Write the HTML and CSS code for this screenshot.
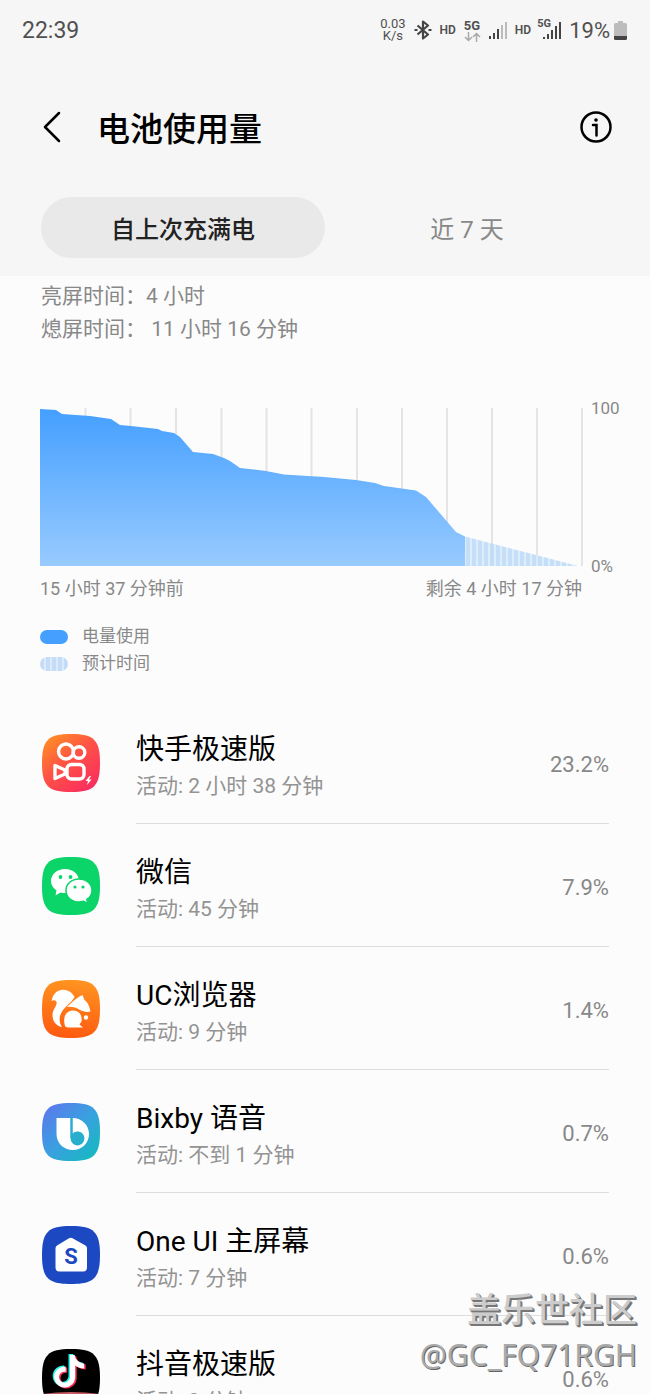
FILE: index.html
```
<!DOCTYPE html>
<html lang="zh-CN">

<head>
	<meta charset="UTF-8" />
	<meta name="viewport" content="width=device-width, initial-scale=1.0" />
	<title>电池使用量</title>
	<link rel="stylesheet" href="styles.css">
</head>

<body>
	<!-- shared by every app icon -->
	<svg class="defs" width="0" height="0" aria-hidden="true">
		<defs>
			<path id="squircle" d="M0 29C0 6 6 0 29 0S58 6 58 29 52 58 29 58 0 52 0 29Z" />
			<clipPath id="squircle-clip"><use href="#squircle" /></clipPath>
			<linearGradient id="ks-bg" x1="0" y1="0" x2="0.8" y2="1">
				<stop offset="0" stop-color="#ff9a1f" />
				<stop offset="0.5" stop-color="#ff5245" />
				<stop offset="1" stop-color="#f92d60" />
			</linearGradient>
			<linearGradient id="uc-bg" x1="0.6" y1="0" x2="0.5" y2="1">
				<stop offset="0" stop-color="#ff9420" />
				<stop offset="1" stop-color="#ff5a10" />
			</linearGradient>
			<linearGradient id="bixby-bg" x1="0" y1="0" x2="1" y2="1">
				<stop offset="0" stop-color="#5f74ee" />
				<stop offset="0.5" stop-color="#3aa0e0" />
				<stop offset="1" stop-color="#10bdbb" />
			</linearGradient>
		</defs>
	</svg>

	<div class="screen">
		<header class="header">
			<div class="status-bar">
				<span class="clock">22:39</span>
				<div class="status-icons">
					<span class="net-speed">0.03<br>K/s</span>
					<svg class="bluetooth" width="18" height="20" viewBox="0 0 18 20" fill="none" stroke="#444" stroke-width="2.200" stroke-linejoin="round">
						<path d="M3.500 5.500L14 14.500L9 18.500V1.500L14 5.500L3.500 14.500" />
						<path d="M0.500 10h3M14.500 10h3" />
					</svg>
					<span class="hd">HD</span>
					<span class="net-type">5G
						<svg width="17" height="10" viewBox="0 0 17 10" fill="none" stroke="#aaa" stroke-width="1.500">
							<path d="M4.500 0v8M1 5l3.500 3.500L8 5M12.500 10V2M9 5l3.500-3.500L16 5" />
						</svg>
					</span>
					<svg class="signal" width="18" height="18" viewBox="0 0 18 18">
						<path fill="#444" d="M0 15h2v3H0zM4 12h2v6H4zM8 8h2v10H8z" />
						<path fill="#bbb" d="M12 4h2v14h-2zM16 1h2v17h-2z" />
					</svg>
					<span class="hd">HD</span>
					<span class="signal-5g">
						<svg width="18" height="18" viewBox="0 0 18 18">
							<path fill="#444" d="M0 16h2v2H0zM4 13h2v5H4zM8 9h2v9H8zM12 5h2v13h-2zM16 1h2v17h-2z" />
						</svg>
						<span>5G</span>
					</span>
					<span class="battery-level">19%</span>
					<svg class="battery" width="13" height="19" viewBox="0 0 13 19">
						<path fill="#bcbcbc" d="M4 0h5v2h2.500a1.500 1.500 0 0 1 1.500 1.500V15H0V3.500A1.500 1.500 0 0 1 1.500 2H4z" />
						<path fill="#444" d="M0 15h13v2.500a1.500 1.500 0 0 1-1.500 1.500h-10A1.500 1.500 0 0 1 0 17.500z" />
					</svg>
				</div>
			</div>

			<div class="title-bar">
				<button class="icon-btn" aria-label="返回">
					<svg width="18" height="32" viewBox="0 0 18 32" fill="none" stroke="#000" stroke-width="2.500" stroke-linecap="round" stroke-linejoin="round">
						<path d="M16 2L2 16l14 14" />
					</svg>
				</button>
				<h1>电池使用量</h1>
				<button class="icon-btn" aria-label="信息">
					<svg width="32" height="32" viewBox="0 0 32 32" fill="none" stroke="#000" stroke-width="2.500" stroke-linecap="round">
						<circle cx="16" cy="16" r="14.500" />
						<path d="M13 14h3.500v10.500" />
						<circle cx="16" cy="9" r="1.800" fill="#000" stroke="none" />
					</svg>
				</button>
			</div>

			<div class="tabs" role="tablist">
				<button class="tab selected" role="tab" aria-selected="true">自上次充满电</button>
				<button class="tab" role="tab" aria-selected="false">近 7 天</button>
			</div>
		</header>

		<main>
			<div class="summary">
				<p>亮屏时间：4 小时</p>
				<p>熄屏时间： 11 小时 16 分钟</p>
			</div>

			<section class="chart">
				<div class="chart-plot">
					<svg viewBox="0 0 543 158" preserveAspectRatio="none" role="img" aria-label="电量使用">
						<defs>
							<linearGradient id="usage" x1="0" y1="0" x2="0" y2="1">
								<stop offset="0" stop-color="#449fff" />
								<stop offset="1" stop-color="#98cbff" />
							</linearGradient>
							<pattern id="stripes" width="6" height="10" patternUnits="userSpaceOnUse">
								<rect width="6" height="10" fill="#d9eafc" />
								<rect width="4" height="10" fill="#bddaf8" />
							</pattern>
						</defs>
						<path class="grid" d="M45.500 0v158M90.500 0v158M136 0v158M181.500 0v158M226.500 0v158M271.500 0v158M317 0v158M362 0v158M407 0v158M452 0v158M497 0v158M542 0v158" />
						<path fill="url(#stripes)" opacity="0.850" d="M425 128.500L538 158H425Z" />
						<path fill="url(#usage)" d="M0 1L16 2L22 6L50 8L71 11L80 17L91 18L118 21L122 23L134 25L140 29L153 44L173 46L184 50L190 53L200 60L226 63L244 66.500L284 69L316 72L335 75L344 78L376 82.500L386 89L416 124L425 128.500V158H0Z" />
					</svg>
					<div class="y-axis">
						<span>100</span>
						<span>0%</span>
					</div>
				</div>
				<div class="x-axis">
					<span>15 小时 37 分钟前</span>
					<span>剩余 4 小时 17 分钟</span>
				</div>
				<ul class="legend">
					<li><i class="swatch used"></i>电量使用</li>
					<li><i class="swatch estimated"></i>预计时间</li>
				</ul>
			</section>

			<ul class="app-list">
				<li class="app">
					<svg class="app-icon" viewBox="0 0 58 58">
						<use href="#squircle" fill="url(#ks-bg)" />
						<g fill="none" stroke="#fff" stroke-width="3.400" stroke-linejoin="round">
							<circle cx="24" cy="17.500" r="7.500" />
							<circle cx="37" cy="18.500" r="5.800" />
							<rect x="25" y="30.500" width="17" height="14.500" rx="4.500" />
							<path d="M13 31.500L23 36v4L13 44.500z" />
						</g>
						<path fill="#fff" d="M47.500 42l-4 5h2.500l-1 4 4.500-5.500H47l2-3.500z" />
					</svg>
					<div class="app-body">
						<div class="app-info">
							<h2>快手极速版</h2>
							<p>活动: 2 小时 38 分钟</p>
						</div>
						<span class="percent">23.2%</span>
					</div>
				</li>
				<li class="app">
					<svg class="app-icon" viewBox="0 0 58 58">
						<use href="#squircle" fill="#0bd468" />
						<path fill="#fff" d="M23 12C15 12 9 17 9 24c0 4 2 7 5.500 9.500L13.500 38.500l5-3c7 2 18-1 18.500-11.500C37 17 31 12 23 12Z" />
						<path fill="#fff" stroke="#0bd468" stroke-width="1.500" d="M37 22c-7.500 0-13 5-13 11.500S29.500 45 37 45c1.500 0 3-.300 4.500-.700l4.500 2.200-1.200-4C48 40.500 50 37 50 33.500 50 27 44.500 22 37 22Z" />
						<g fill="#0bd468">
							<circle cx="18.500" cy="20" r="1.900" />
							<circle cx="28.500" cy="20" r="1.900" />
							<circle cx="33" cy="30" r="1.600" />
							<circle cx="41" cy="30" r="1.600" />
						</g>
					</svg>
					<div class="app-body">
						<div class="app-info">
							<h2>微信</h2>
							<p>活动: 45 分钟</p>
						</div>
						<span class="percent">7.9%</span>
					</div>
				</li>
				<li class="app">
					<svg class="app-icon" viewBox="0 0 58 58">
						<use href="#squircle" fill="url(#uc-bg)" />
						<g fill="#fff">
							<path d="M9.500 21C11 13 16 9.500 21.500 9.700C27 10 30.500 13 32.500 17C29 24 20.500 27 18 36C17 40 18 44 20 47C14 46 10.500 41 10.500 35C10.500 29 15.500 26 14.500 21.500C13 20 11 20 9.500 21Z" />
							<path d="M24.500 27C29 24 32 19 40.500 15L42.500 20C45.500 22 47.500 26 48.500 31.500C44 32.500 41 31.500 38 30C34 27 29 26.500 24.500 27Z" />
							<path d="M23 46C20.500 38 23.500 31 30.500 30.500C37 30.500 40.500 35 39.500 41.500L37.500 44.500L41 47.500H27C25.500 47.500 24 47 23 46Z" />
							<circle cx="44" cy="37.500" r="2.200" />
						</g>
					</svg>
					<div class="app-body">
						<div class="app-info">
							<h2>UC浏览器</h2>
							<p>活动: 9 分钟</p>
						</div>
						<span class="percent">1.4%</span>
					</div>
				</li>
				<li class="app">
					<svg class="app-icon" viewBox="0 0 58 58">
						<use href="#squircle" fill="url(#bixby-bg)" />
						<path fill="#fff" d="M14.500 15H28.500V35H30.500V15C40 15 47 22 47 31C47 40 40 47 31 47C21.500 47 14.500 40 14.500 31Z" />
						<path fill="#28afcd" d="M28.500 15h2v15.500A7 7 0 1 1 28.500 35Z" />
					</svg>
					<div class="app-body">
						<div class="app-info">
							<h2>Bixby 语音</h2>
							<p>活动: 不到 1 分钟</p>
						</div>
						<span class="percent">0.7%</span>
					</div>
				</li>
				<li class="app">
					<svg class="app-icon" viewBox="0 0 58 58">
						<use href="#squircle" fill="#1c49c2" />
						<path fill="#fff" d="M27 12.300a3.500 3.500 0 0 1 3.500 0L43.500 19.500q1.500 1 1.500 2.500V41.500a4 4 0 0 1-4 4H17.500a4 4 0 0 1-4-4V22q0-1.500 1.500-2.500z" />
						<text class="house-letter" x="29" y="38" text-anchor="middle">S</text>
					</svg>
					<div class="app-body">
						<div class="app-info">
							<h2>One UI 主屏幕</h2>
							<p>活动: 7 分钟</p>
						</div>
						<span class="percent">0.6%</span>
					</div>
				</li>
				<li class="app">
					<svg class="app-icon" viewBox="0 0 58 58">
						<defs>
							<path id="note" d="M27.500 6h4.700c.600 4.500 4 8 9.500 8.500v5c-3.500 0-6.500-1-9-3v11.500a10.500 10.500 0 1 1-9.500-10.500v5.300a5.500 5.500 0 1 0 4.300 5.500z" />
						</defs>
						<use href="#squircle" />
						<use href="#note" x="-1" y="-1" fill="#25f4ee" />
						<use href="#note" x="2" y="1" fill="#fe2c55" />
						<use href="#note" x="0.500" fill="#fff" />
						<path fill="#c65a62" clip-path="url(#squircle-clip)" d="M0 45Q29 41 58 45V58H0Z" />
					</svg>
					<div class="app-body">
						<div class="app-info">
							<h2>抖音极速版</h2>
							<p>活动: 3 分钟</p>
						</div>
						<span class="percent">0.6%</span>
					</div>
				</li>
			</ul>
		</main>

		<div class="watermark">
			<strong>盖乐世社区</strong>
			<span>@GC_FQ71RGH</span>
		</div>
	</div>
</body>

</html>
```
FILE: styles.css
```
* {
	box-sizing: border-box;
}
body, h1, h2, p, ul {
	margin: 0;
	padding: 0;
}
body {
	background-color: #fcfcfc;
	font-family: Roboto, 'Noto Sans CJK SC', sans-serif;
	color: #000;
}
ul {
	list-style: none;
}
button {
	border: none;
	background: none;
	padding: 0;
	font: inherit;
	color: inherit;
	cursor: pointer;
}
svg {
	display: block;
	flex-shrink: 0;
}
.defs {
	position: absolute;
}
.screen {
	position: relative;
	height: 100vh;
	overflow: hidden;
}

/* header */
.header {
	background-color: #f6f6f6;
	padding-bottom: 18px;
}
.status-bar {
	display: flex;
	justify-content: space-between;
	align-items: center;
	height: 60px;
	padding: 0 23px 0 22px;
	color: #505050;
}
.clock {
	font-size: 23px;
}
.status-icons {
	display: flex;
	align-items: center;
	gap: 8px;
}
.net-speed {
	font-size: 13px;
	line-height: 12px;
	text-align: center;
}
.hd {
	font-size: 12px;
	font-weight: 600;
}
.net-type {
	font-size: 13px;
	font-weight: 700;
	line-height: 13px;
}
.signal-5g {
	position: relative;
	padding-left: 4px;
}
.signal-5g span {
	position: absolute;
	top: -3px;
	left: -2px;
	font-size: 11px;
	font-weight: 700;
	line-height: 11px;
}
.battery-level {
	font-size: 22px;
}
.battery {
	margin-left: -4px;
}
.title-bar {
	display: flex;
	align-items: center;
	height: 134px;
	padding: 0 38px 0 43px;
}
.title-bar h1 {
	flex: 1;
	margin-left: 36px;
	font-size: 33px;
	font-weight: 500;
}
.tabs {
	display: grid;
	grid-template-columns: 1fr 1fr;
	padding: 3px 41px 0;
}
.tab {
	height: 61px;
	border-radius: 31px;
	font-size: 24px;
	color: #888;
}
.tab.selected {
	background-color: #e9e9e9;
	font-weight: 500;
	color: #222;
}

/* screen time */
.summary {
	padding: 4px 41px 0;
	font-size: 21px;
	line-height: 33px;
	color: #888;
}

/* chart */
.chart {
	padding: 62px 0 0 40px;
	color: #888;
}
.chart-plot {
	display: flex;
	gap: 8px;
}
.chart-plot > svg {
	flex: 1;
	min-width: 0;
	height: 158px;
}
.grid {
	fill: none;
	stroke: #e4e4e4;
	stroke-width: 2;
}
.y-axis {
	display: flex;
	flex-direction: column;
	justify-content: space-between;
	width: 59px;
	margin: -10px 0;
	font-size: 17px;
	line-height: 20px;
}
.x-axis {
	display: flex;
	justify-content: space-between;
	padding: 9px 68px 0 0;
	font-size: 18px;
	line-height: 28px;
}
.legend {
	padding: 20px 0 24px;
	font-size: 17px;
	line-height: 27px;
}
.legend li {
	display: flex;
	align-items: center;
	gap: 14px;
}
.swatch {
	width: 28px;
	height: 14px;
	border-radius: 7px;
}
.swatch.used {
	background-color: #449fff;
}
.swatch.estimated {
	background: repeating-linear-gradient(to right, #c4dcf8 0 4px, #dcebfc 4px 6px);
}

/* apps */
.app {
	display: flex;
	align-items: center;
	gap: 36px;
	padding: 0 41px 0 42px;
}
.app-icon {
	width: 58px;
	height: 58px;
}
.app-body {
	flex: 1;
	display: flex;
	justify-content: space-between;
	align-items: center;
	border-bottom: 1px solid #dedede;
}
.app-info {
	padding: 31px 0 19px;
}
.app-info h2 {
	font-size: 28px;
	font-weight: 400;
	line-height: 36px;
}
.app-info p {
	font-size: 21px;
	line-height: 36px;
	color: #939393;
}
.percent {
	padding-top: 4px;
	font-size: 22px;
	color: #888;
}
.house-letter {
	font-size: 22px;
	font-weight: 700;
	fill: #1c49c2;
}

.watermark {
	position: absolute;
	right: 13px;
	bottom: 17px;
	display: flex;
	flex-direction: column;
	align-items: flex-end;
	font-family: 'Noto Sans', 'Noto Sans CJK SC', sans-serif;
	line-height: 45px;
	pointer-events: none;
}
.watermark strong {
	font-size: 34px;
	font-weight: 500;
	color: #ccc;
	text-shadow: 1px 1px 0 #777, 2px 2px 0 #777;
}
.watermark span {
	font-size: 30px;
	color: #aaa;
	text-shadow: 1px 1px 0 #666;
}
```
